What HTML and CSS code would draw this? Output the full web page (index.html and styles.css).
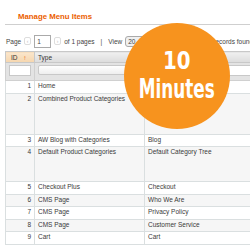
FILE: index.html
```
<!DOCTYPE html>
<html lang="en">
<head>
    <meta charset="UTF-8">
    <title>Manage Menu Items</title>
    <link rel="stylesheet" href="styles.css">
</head>
<body>
<div class="content-header">
    <h3 class="head-title">Manage Menu Items</h3>
</div>
<div class="pager">
    <span>Page</span>
    <span class="arrow">&lsaquo;</span>
    <span class="page-input">1</span>
    <span class="arrow">&rsaquo;</span>
    <span>of 1 pages</span>
    <span class="sep">|</span>
    <span>View</span>
    <span class="view-select">20</span>
    <span class="spacer"></span>
    <span class="found">9 records found</span>
</div>
<table class="grid">
    <thead>
        <tr class="headings">
            <th class="col-id sorted">ID <span class="sort">&uarr;</span></th>
            <th class="col-type">Type</th>
            <th class="col-title">Title</th>
        </tr>
        <tr class="filter">
            <th class="col-id"><div class="input-text"></div></th>
            <th class="col-type"><div class="select"></div></th>
            <th class="col-title"><div class="input-text"></div></th>
        </tr>
    </thead>
    <tbody>
        <tr class="odd"><td class="col-id">1</td><td>Home</td><td></td></tr>
        <tr class="even tall-a"><td class="col-id">2</td><td>Combined Product Categories</td><td></td></tr>
        <tr class="odd"><td class="col-id">3</td><td>AW Blog with Categories</td><td>Blog</td></tr>
        <tr class="even tall-b"><td class="col-id">4</td><td>Default Product Categories</td><td>Default Category Tree</td></tr>
        <tr class="odd"><td class="col-id">5</td><td>Checkout Plus</td><td>Checkout</td></tr>
        <tr class="even"><td class="col-id">6</td><td>CMS Page</td><td>Who We Are</td></tr>
        <tr class="odd"><td class="col-id">7</td><td>CMS Page</td><td>Privacy Policy</td></tr>
        <tr class="even"><td class="col-id">8</td><td>CMS Page</td><td>Customer Service</td></tr>
        <tr class="odd"><td class="col-id">9</td><td>Cart</td><td>Cart</td></tr>
    </tbody>
</table>
<div class="badge">
    <span class="badge-num">10</span>
    <span class="badge-word">Minutes</span>
</div>
</body>
</html>
```
FILE: styles.css
```
body { margin: 0; font-family: "Liberation Sans", Arial, sans-serif; font-size: 6.5px; color: #2f2f2f; background: #fff; overflow: hidden; position: relative; }
.content-header { margin-left: 5px; border-bottom: 1px solid #cfcfcf; height: 24px; }
.head-title { margin: 0; padding: 12px 0 0 13px; font-size: 7.8px; font-weight: bold; color: #eb5e00; }
.pager { display: flex; align-items: center; gap: 3px; margin: 10px 0 0 6px; height: 12px; white-space: nowrap; color: #444; }
.pager .arrow { width: 5px; height: 6px; border: 1px solid #ddd; border-radius: 2px; color: #bbb; font-size: 5px; line-height: 6px; text-align: center; }
.pager .page-input { width: 13px; height: 11px; border: 1px solid #aaa; line-height: 11px; padding-left: 2px; background: #fff; }
.pager .sep { margin: 0 3px; }
.pager .view-select { width: 24px; height: 9px; border: 1px solid #aaa; border-radius: 3px; line-height: 9px; padding-left: 2px; background: #f0f0f0; }
.pager .spacer { flex: 1; }
.pager .found { margin-right: -3px; }
.grid { border-collapse: collapse; margin: 4px 0 0 5px; width: 260px; table-layout: fixed; }
.grid th, .grid td { padding: 0 3px; text-align: left; border: 1px solid #dadfe0; overflow: hidden; white-space: nowrap; }
.grid .col-id { width: 20px; }
.grid .col-type { width: 103px; }
.headings th { height: 10px; background: linear-gradient(#f0f0f0, #dcdcdc); border-color: #c8c8c8; font-weight: normal; color: #333; }
.headings th.sorted { background: linear-gradient(#fbe6cc, #f6d6ae); padding-left: 5px; }
.headings .sort { color: #eb5e00; margin-left: 4px; }
.filter th { height: 15px; background: #e3e3e3; border-color: #d0d0d0; vertical-align: top; padding-top: 2px; }
.filter .input-text { height: 9px; background: #fff; border: 1px solid #c8c8c8; }
.filter .select { height: 8px; background: linear-gradient(#fff, #eee); border: 1px solid #c8c8c8; border-radius: 2px; }
.grid tbody td { height: 10.5px; vertical-align: top; padding-top: 1px; color: #3a3a3a; }
.grid tbody td.col-id { text-align: right; }
.grid tbody tr.odd td { background: #fff; }
.grid tbody tr.even td { background: #f6f6f6; }
.grid tbody tr.tall-a td { height: 39px; }
.grid tbody tr.tall-b td { height: 33px; }
.badge { position: absolute; left: 124px; top: 23px; width: 106px; height: 106px; border-radius: 50%; background: #f7931e; color: #fff; display: flex; flex-direction: column; align-items: center; justify-content: center; font-family: "DejaVu Sans Condensed", "DejaVu Sans", sans-serif; font-weight: bold; line-height: 1; }
.badge-num { font-size: 25px; margin-top: -2px; transform: scaleX(0.88); }
.badge-word { font-size: 26px; margin-top: 3px; transform: scaleX(0.72); }
```
